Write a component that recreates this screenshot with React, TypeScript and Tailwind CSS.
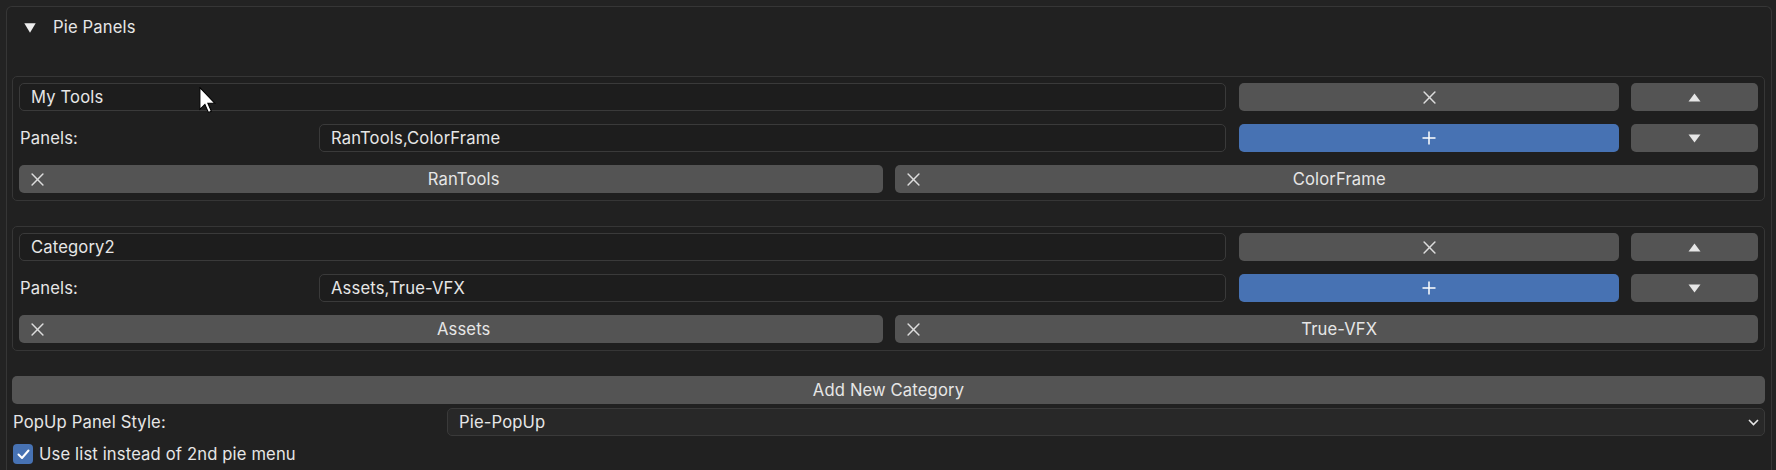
import React from "react";

const font = "font-['Inter','Noto_Sans',sans-serif] tracking-[0.15px]";

function XIcon({ size = 13 }: { size?: number }) {
  return (
    <svg width={size} height={size} viewBox="0 0 12 12" fill="none">
      <path d="M1 1 L11 11 M11 1 L1 11" stroke="#dcdcdc" strokeWidth="1.4" strokeLinecap="round" />
    </svg>
  );
}

function PlusIcon() {
  return (
    <svg width="14" height="14" viewBox="0 0 14 14" fill="none">
      <path d="M7 0.5 V13.5 M0.5 7 H13.5" stroke="#ffffff" strokeWidth="1.5" />
    </svg>
  );
}

function TriUp() {
  return (
    <svg width="13" height="9" viewBox="0 0 13 9">
      <path d="M6.5 0.5 L12.5 8.5 L0.5 8.5 Z" fill="#e6e6e6" />
    </svg>
  );
}

function TriDown() {
  return (
    <svg width="13" height="9" viewBox="0 0 13 9">
      <path d="M0.5 0.5 L12.5 0.5 L6.5 8.5 Z" fill="#e6e6e6" />
    </svg>
  );
}

function Field({ text, className = "" }: { text: string; className?: string }) {
  return (
    <div
      className={`h-[28px] rounded-[5px] border border-[#3a3a3a] bg-[#1d1d1d] flex items-center pl-[11px] text-[16.6px] text-[#e6e6e6] ${className}`}
    >
      {text}
    </div>
  );
}

function RemoveButton({ label }: { label: string }) {
  return (
    <div className="h-[28px] rounded-[5px] bg-[#545454] flex items-center text-[16.6px] text-[#e6e6e6]">
      <div className="w-[36px] flex items-center justify-center pl-[1px]">
        <XIcon />
      </div>
      <div className="flex-1 text-center pr-[10px]">{label}</div>
    </div>
  );
}

function Category({ name, panels, items }: { name: string; panels: string; items: string[] }) {
  return (
    <div className="rounded-[5px] border border-[#363636] bg-[#1f1f1f] px-[6px] pt-[6px] pb-[7px] flex flex-col gap-[13px]">
      <div className="flex items-center">
        <Field text={name} className="w-[1207px]" />
        <div className="ml-[13px] w-[380px] h-[28px] rounded-[5px] bg-[#545454] flex items-center justify-center">
          <XIcon />
        </div>
        <div className="ml-[12px] w-[127px] h-[28px] rounded-[5px] bg-[#545454] flex items-center justify-center">
          <TriUp />
        </div>
      </div>
      <div className="flex items-center">
        <div className="w-[300px] pl-[1px] text-[16.6px] text-[#e6e6e6]">Panels:</div>
        <Field text={panels} className="w-[907px]" />
        <div className="ml-[13px] w-[380px] h-[28px] rounded-[5px] bg-[#4772b3] flex items-center justify-center">
          <PlusIcon />
        </div>
        <div className="ml-[12px] w-[127px] h-[28px] rounded-[5px] bg-[#545454] flex items-center justify-center">
          <TriDown />
        </div>
      </div>
      <div className="grid grid-cols-2 gap-[12px]">
        {items.map((it) => (
          <RemoveButton key={it} label={it} />
        ))}
      </div>
    </div>
  );
}

export default function App() {
  return (
    <div className={`w-[1776px] h-[470px] overflow-hidden bg-[#232323] pt-[6px] pl-[6px] pr-[4px] ${font} relative`}>
      <div className="h-[500px] rounded-t-[6px] border border-b-0 border-[#363636] bg-[#212121] pl-[5px] pr-[6px]">
        <div className="h-[41px] flex items-center">
          <div className="w-[36px] pl-[12px] flex items-center">
            <svg width="12" height="10" viewBox="0 0 12 10">
              <path d="M0.3 0.3 L11.7 0.3 L6 9.7 Z" fill="#eeeeee" />
            </svg>
          </div>
          <div className="pl-[5px] text-[16.6px] text-[#e6e6e6]">Pie Panels</div>
        </div>
        <div className="mt-[28px] flex flex-col gap-[25px]">
          <Category name="My Tools" panels="RanTools,ColorFrame" items={["RanTools", "ColorFrame"]} />
          <Category name="Category2" panels="Assets,True-VFX" items={["Assets", "True-VFX"]} />
        </div>
        <div className="mt-[25px] h-[28px] rounded-[5px] bg-[#545454] flex items-center justify-center text-[16.6px] text-[#e6e6e6]">
          Add New Category
        </div>
        <div className="mt-[4px] flex items-center h-[28px]">
          <div className="w-[435px] pl-[1px] text-[16.6px] text-[#e6e6e6]">PopUp Panel Style:</div>
          <div className="flex-1 h-[28px] rounded-[5px] border border-[#3a3a3a] bg-[#282828] flex items-center pl-[11px] pr-[5px] text-[16.6px] text-[#e6e6e6]">
            <div className="flex-1">Pie-PopUp</div>
            <svg width="11" height="7" viewBox="0 0 11 7" fill="none">
              <path d="M1 1 L5.5 5.5 L10 1" stroke="#e6e6e6" strokeWidth="1.6" />
            </svg>
          </div>
        </div>
        <div className="mt-[4px] flex items-center h-[28px] pl-[1px]">
          <div className="w-[20px] h-[20px] rounded-[4px] bg-[#4772b3] flex items-center justify-center">
            <svg width="13" height="11" viewBox="0 0 13 11" fill="none">
              <path d="M1.5 5.5 L5 9 L11.5 1.5" stroke="#ffffff" strokeWidth="2" strokeLinecap="round" strokeLinejoin="round" />
            </svg>
          </div>
          <div className="pl-[6px] text-[16.6px] text-[#e6e6e6]">Use list instead of 2nd pie menu</div>
        </div>
      </div>
      <svg className="absolute left-[199px] top-[87px]" width="18" height="27" viewBox="0 0 13 20">
        <path d="M0.5 0.5 L0.5 16.5 L4.2 12.9 L6.8 18.8 L9 17.9 L6.4 12 L11.5 12 Z" fill="#ffffff" stroke="#000000" strokeWidth="0.8" strokeLinejoin="miter" />
      </svg>
    </div>
  );
}
